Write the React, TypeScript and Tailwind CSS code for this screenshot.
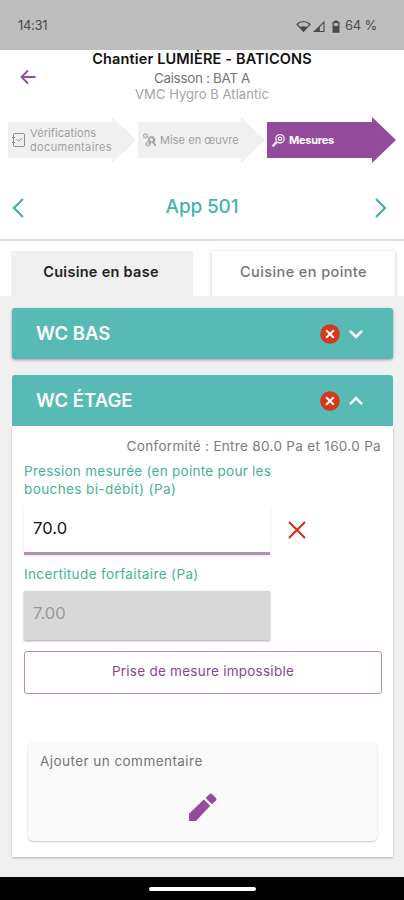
import React, { useState } from 'react';

type Status = 'ok' | 'error';

interface Room {
  id: string;
  name: string;
  status: Status;
}

const ROOMS: Room[] = [
  { id: 'wc-bas', name: 'WC BAS', status: 'error' },
  { id: 'wc-etage', name: 'WC ÉTAGE', status: 'error' },
];

const StatusBar: React.FC = () => (
  <div className="flex h-[50px] shrink-0 items-center justify-between bg-[#bebebe] pl-[18px] pr-[27px] pt-[2px] text-[13px] text-[#4a4a4a]">
    <span className="tracking-[-0.3px]">14:31</span>
    <div className="flex items-center">
      <svg width="15" height="13" viewBox="0 0 15 13" fill="none">
        <path d="M1 4.2C4.8 0.6 10.2 0.6 14 4.2L7.5 11.4Z" stroke="#4a4a4a" strokeWidth="1.2" />
        <path d="M3.6 7.2C6 5.8 9 5.8 11.4 7.2L7.5 11.6Z" fill="#4a4a4a" />
      </svg>
      <svg className="ml-[2px]" width="13" height="13" viewBox="0 0 13 13" fill="none">
        <path d="M1.5 11.5L11 2V11.5Z" stroke="#4a4a4a" strokeWidth="1.1" />
        <path d="M1.5 12L6.8 6.4V12Z" fill="#4a4a4a" />
      </svg>
      <svg className="ml-[6px]" width="8" height="13" viewBox="0 0 8 13">
        <path d="M2.5 0.5h3v1.3H7.5v11H0.5v-11h2z" fill="#4a4a4a" />
        <rect x="1.8" y="3.2" width="4.4" height="2.6" fill="#bebebe" />
      </svg>
      <span className="ml-[5px] tracking-[-0.2px]">64 %</span>
    </div>
  </div>
);

const Header: React.FC = () => (
  <header className="grid h-[67px] shrink-0 grid-cols-[56px_1fr_56px]">
    <button className="flex items-start pl-[20px] pt-[19px]" aria-label="Retour">
      <svg width="16" height="16" viewBox="0 0 16 16" fill="none" stroke="#924c9b" strokeWidth="1.8">
        <path d="M15.5 8H2M8 1.5L1.5 8L8 14.5" />
      </svg>
    </button>
    <div className="flex flex-col items-center whitespace-nowrap text-center">
      <h1 className="text-[14.5px] font-semibold leading-[18px] tracking-[0.15px] text-[#111]">
        Chantier LUMIÈRE - BATICONS
      </h1>
      <p className="mt-[1px] text-[13.5px] leading-[18px] tracking-[-0.35px] text-[#757575]">Caisson : BAT A</p>
      <p className="text-[13px] leading-[15px] tracking-[0.05px] text-[#a3a3a3]">VMC Hygro B Atlantic</p>
    </div>
  </header>
);

interface StepProps {
  icon: React.ReactNode;
  active?: boolean;
  children: React.ReactNode;
}

const Step: React.FC<StepProps> = ({ icon, active, children }) => (
  <div
    className={`flex h-[46px] items-center pl-[4px] [clip-path:polygon(0_5px,calc(100%_-_24px)_5px,calc(100%_-_24px)_0,100%_50%,calc(100%_-_24px)_100%,calc(100%_-_24px)_calc(100%_-_5px),0_calc(100%_-_5px))] ${active ? 'bg-[#924c9b] text-white' : 'bg-[#f0f0f0] text-[#a0a0a0]'}`}
  >
    {icon}
    {children}
  </div>
);

const Steps: React.FC = () => (
  <nav className="grid h-[46px] shrink-0 grid-cols-[128px_127px_129px] gap-[2px] pl-[8px]">
    <Step
      icon={
        <svg width="14" height="16" viewBox="0 0 14 16" fill="none" stroke="#8d8d8d" strokeWidth="1">
          <rect x="1.5" y="1.5" width="11" height="13" rx="1" />
          <path d="M4.5 7L6.8 9.3L10 6M0 5.5h3M0 10.5h3" />
        </svg>
      }
    >
      <span className="ml-[4px] text-[11px] leading-[14px] tracking-[0.1px]">
        Vérifications
        <br />
        <span className="tracking-[0.35px]">documentaires</span>
      </span>
    </Step>
    <Step
      icon={
        <svg width="15" height="16" viewBox="0 0 15 16" fill="none" stroke="#999">
          <circle cx="3.5" cy="3.8" r="1.9" strokeWidth="1.6" strokeDasharray="1.2 0.6" />
          <circle cx="9.5" cy="7.8" r="2.6" strokeWidth="2.4" strokeDasharray="1.6 0.5" />
          <circle cx="5.8" cy="12" r="1.8" strokeWidth="1.6" strokeDasharray="1.2 0.6" />
          <path d="M11.5 10l2 4" strokeWidth="1.6" />
        </svg>
      }
    >
      <span className="ml-[3px] whitespace-nowrap text-[11px] leading-[14px] tracking-[0.05px]">Mise en œuvre</span>
    </Step>
    <Step
      active
      icon={
        <svg width="15" height="15" viewBox="0 0 15 15" fill="none" stroke="#f3e8f5">
          <circle cx="9" cy="5.8" r="4.2" strokeWidth="1.3" />
          <circle cx="9" cy="5.8" r="1.7" strokeWidth="1.4" />
          <path d="M5.6 9.2L1.6 13.4" strokeWidth="2.4" />
        </svg>
      }
    >
      <span className="ml-[3px] text-[11px] font-bold leading-[14px] tracking-[-0.25px]">Mesures</span>
    </Step>
  </nav>
);

const RoomStatus: React.FC<{ status: Status }> = ({ status }) =>
  status === 'error' ? (
    <svg width="20" height="20" viewBox="0 0 20 20">
      <circle cx="10" cy="10" r="9.8" fill="#d5381b" />
      <path d="M6.2 6.2L13.8 13.8M13.8 6.2L6.2 13.8" stroke="#fff" strokeWidth="2" />
    </svg>
  ) : null;

interface RoomHeaderProps {
  room: Room;
  open: boolean;
  onToggle: () => void;
}

const RoomHeader: React.FC<RoomHeaderProps> = ({ room, open, onToggle }) => (
  <button
    onClick={onToggle}
    className={`flex w-full items-center bg-[#57bab4] pl-[24px] pr-[30px] text-left ${open ? 'h-[51px] rounded-t-[3px]' : 'h-[51px] rounded-[3px] shadow-[0_1px_3px_rgba(0,0,0,0.35)]'}`}
  >
    <span className="flex-1 text-[18.5px] font-semibold text-white">{room.name}</span>
    <RoomStatus status={room.status} />
    <svg className="ml-[9px]" width="14" height="10" viewBox="0 0 14 10" fill="none" stroke="#fff" strokeWidth="2.6">
      <path d={open ? 'M1 8.2L7 2.2L13 8.2' : 'M1 1.8L7 7.8L13 1.8'} />
    </svg>
  </button>
);

const MeasureForm: React.FC = () => (
  <div className="flex h-[431px] flex-col bg-white px-[12px] shadow-[0_1px_2px_rgba(0,0,0,0.28)]">
    <p className="mt-[11px] whitespace-nowrap text-right text-[13.5px] leading-[18px] tracking-[0.32px] text-[#7b7b7b]">
      Conformité : Entre 80.0 Pa et 160.0 Pa
    </p>
    <label className="mt-[7px] whitespace-nowrap text-[13.5px] leading-[18px] tracking-[0.27px] text-[#45b399]">
      Pression mesurée (en pointe pour les
      <br />
      <span className="tracking-[0.4px]">bouches bi-débit) (Pa)</span>
    </label>
    <div className="mt-[8px] flex items-center">
      <input
        defaultValue="70.0"
        className="h-[49px] w-[246px] border-b-[3px] border-[#b08fb5] bg-white px-[9px] pb-[2px] text-[16.5px] tracking-[0.1px] text-[#111] shadow-[0_1px_2px_rgba(0,0,0,0.12)] outline-none"
      />
      <svg className="-mt-[1px] ml-[18px]" width="18" height="18" viewBox="0 0 18 18" stroke="#d5291b" strokeWidth="2">
        <path d="M1 1L17 17M17 1L1 17" />
      </svg>
    </div>
    <label className="mt-[10px] text-[13.5px] leading-[18px] tracking-[0.38px] text-[#45b399]">
      Incertitude forfaitaire (Pa)
    </label>
    <input
      disabled
      defaultValue="7.00"
      className="mt-[8px] h-[49px] w-[246px] shrink-0 bg-[#d8d8d8] px-[9px] pb-[5px] text-[16.5px] tracking-[0.1px] text-[#989898] shadow-[0_1px_2px_rgba(0,0,0,0.35)]"
    />
    <button className="mt-[11px] h-[43px] w-[358px] shrink-0 rounded-[3px] border border-[#b58abb] pb-[2px] text-[13.5px] tracking-[0.25px] text-[#8a4594]">
      Prise de mesure impossible
    </button>
    <div className="ml-[4px] mt-[48px] flex h-[99px] w-[349px] flex-col rounded-[5px] bg-[#fafafa] pl-[12px] shadow-[0_1px_2px_rgba(0,0,0,0.22)]">
      <span className="mt-[10px] text-[13.5px] leading-[18px] tracking-[0.45px] text-[#757575]">
        Ajouter un commentaire
      </span>
      <svg className="ml-[149px] mt-[23px]" width="28" height="28" viewBox="0 0 28 28" fill="#924c9b">
        <path d="M0 20.8L14.8 6.6L21.2 12.8L7 28H0.8Q0 28 0 27.2Z" />
        <path d="M16.6 5L20.4 1.2Q21.8 0 23.2 1.2L27 5Q28 6.4 27 7.6L23 11.2Z" />
      </svg>
    </div>
  </div>
);

const App: React.FC = () => {
  const [tab, setTab] = useState<'base' | 'pointe'>('base');
  const [openRoom, setOpenRoom] = useState<string | null>('wc-etage');

  const tabClass = (active: boolean) =>
    active
      ? 'bg-[#f0f0f0] font-semibold text-[#222] tracking-[0.28px]'
      : 'bg-white font-medium text-[#757575] tracking-[0.4px] shadow-[0_1px_4px_rgba(0,0,0,0.25)]';

  return (
    <div className="flex h-[900px] w-[404px] flex-col overflow-hidden bg-white font-['Inter',sans-serif]">
      <StatusBar />
      <Header />
      <Steps />

      <div className="flex h-[78px] shrink-0 items-center justify-between border-b-2 border-[#dedede] pl-[12px] pr-[17px] pt-[13px]">
        <svg width="12" height="20" viewBox="0 0 12 20" fill="none" stroke="#3fb1a6" strokeWidth="2.2">
          <path d="M11 1L2 10L11 19" />
        </svg>
        <h2 className="pl-[5px] text-[19px] font-medium tracking-[-0.15px] text-[#45b5ac]">App 501</h2>
        <svg width="12" height="20" viewBox="0 0 12 20" fill="none" stroke="#3fb1a6" strokeWidth="2.2">
          <path d="M1 1L10 10L1 19" />
        </svg>
      </div>

      <div className="grid h-[55px] shrink-0 grid-cols-[182px_183px] gap-[19px] pl-[11px] pt-[10px] text-[14.5px]">
        <button onClick={() => setTab('base')} className={`pb-[3px] pr-[2px] ${tabClass(tab === 'base')}`}>
          Cuisine en base
        </button>
        <button onClick={() => setTab('pointe')} className={`pb-[3px] ${tabClass(tab === 'pointe')}`}>
          Cuisine en pointe
        </button>
      </div>

      <main className="flex flex-1 flex-col gap-[16px] bg-[#f0f0f0] pl-[12px] pr-[11px] pt-[12px]">
        {ROOMS.map((room) => (
          <section key={room.id}>
            <RoomHeader
              room={room}
              open={openRoom === room.id}
              onToggle={() => setOpenRoom(openRoom === room.id ? null : room.id)}
            />
            {openRoom === room.id && <MeasureForm />}
          </section>
        ))}
      </main>

      {/* System gesture bar */}
      <div className="flex h-[23px] shrink-0 items-center justify-center bg-black">
        <div className="h-[4px] w-[107px] rounded-full bg-white" />
      </div>
    </div>
  );
};

export default App;
